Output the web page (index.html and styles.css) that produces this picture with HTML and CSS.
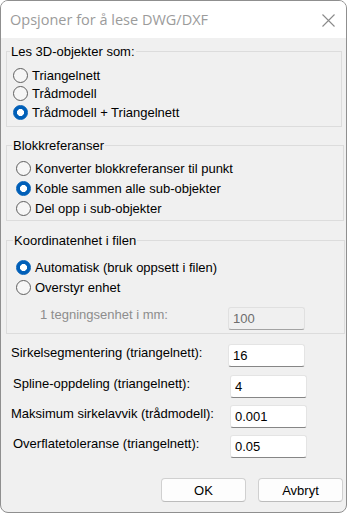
FILE: index.html
```html
<!DOCTYPE html>
<html lang="no">
<head>
  <meta charset="UTF-8">
  <meta name="viewport" content="width=device-width, initial-scale=1.0">
  <title>Opsjoner for å lese DWG/DXF</title>
  <link rel="stylesheet" href="styles.css">
</head>
<body>
  <div class="window">
    <div class="titlebar">
      <span class="title">Opsjoner for å lese DWG/DXF</span>
      <svg class="close" width="13" height="13" viewBox="0 0 13 13">
        <path d="M0.5 0.5 L12.5 12.5 M12.5 0.5 L0.5 12.5" stroke="#8a8a8a" stroke-width="1.1" fill="none"/>
      </svg>
    </div>

    <div class="content">
      <fieldset class="group group-objects">
        <legend>Les 3D-objekter som:</legend>
        <div class="options">
          <label class="option"><input type="radio" name="objects"> Triangelnett</label>
          <label class="option"><input type="radio" name="objects"> Trådmodell</label>
          <label class="option"><input type="radio" name="objects" checked> Trådmodell + Triangelnett</label>
        </div>
      </fieldset>

      <fieldset class="group group-blocks">
        <legend>Blokkreferanser</legend>
        <div class="options">
          <label class="option"><input type="radio" name="blocks"> Konverter blokkreferanser til punkt</label>
          <label class="option"><input type="radio" name="blocks" checked> Koble sammen alle sub-objekter</label>
          <label class="option"><input type="radio" name="blocks"> Del opp i sub-objekter</label>
        </div>
      </fieldset>

      <fieldset class="group group-units">
        <legend>Koordinatenhet i filen</legend>
        <div class="options">
          <label class="option"><input type="radio" name="units" checked> Automatisk (bruk oppsett i filen)</label>
          <label class="option"><input type="radio" name="units"> Overstyr enhet</label>
          <div class="unit-row">
            <label for="unit">1 tegningsenhet i mm:</label>
            <input id="unit" type="text" value="100" disabled>
          </div>
        </div>
      </fieldset>

      <div class="fields">
        <div class="field">
          <label for="segments">Sirkelsegmentering (triangelnett):</label>
          <input id="segments" type="text" value="16">
        </div>
        <div class="field indent">
          <label for="spline">Spline-oppdeling (triangelnett):</label>
          <input id="spline" type="text" value="4">
        </div>
        <div class="field wide">
          <label for="deviation">Maksimum sirkelavvik (trådmodell):</label>
          <input id="deviation" type="text" value="0.001">
        </div>
        <div class="field indent">
          <label for="tolerance">Overflatetoleranse (triangelnett):</label>
          <input id="tolerance" type="text" value="0.05">
        </div>
      </div>

      <div class="buttons">
        <button>OK</button>
        <button>Avbryt</button>
      </div>
    </div>
  </div>
</body>
</html>
```

FILE: styles.css
```css
body {
  margin: 0;
  background-color: #fff;
  font-family: "Liberation Sans", Arial, sans-serif;
  font-size: 13px;
  color: #000;
}

.window {
  width: 347px;
  height: 513px;
  box-sizing: border-box;
  border: 1px solid #8f8f8f;
  border-radius: 8px;
  overflow: hidden;
  background-color: #f0f0f0;
}

.titlebar {
  height: 37px;
  display: flex;
  align-items: center;
  justify-content: space-between;
  padding: 0 11px 0 9px;
  background-color: #fff;
}

.title {
  font-family: "Open Sans", sans-serif;
  font-size: 14.5px;
  color: #9b9b9b;
}

.close {
  margin-top: 1px;
}

.content {
  padding: 0 3px 0 5px;
}

/* Group boxes */
.group {
  margin: 0;
  padding: 0;
  min-width: 0;
  box-sizing: border-box;
  border: 1px solid #dcdcdc;
}

.group legend {
  padding: 0 1px;
  line-height: 15px;
}

.group-objects {
  margin-top: 6px;
  width: 336px;
}

.group-objects legend {
  margin-left: 3px;
}

.group-objects .options {
  padding: 7px 0 4px 6px;
}

.group-objects .option {
  height: 18px;
}

.group-objects .option:last-child {
  height: 20px;
}

.group-blocks {
  margin-top: 11px;
  width: 338px;
}

.group-blocks legend {
  margin-left: 5px;
}

.group-blocks .options {
  padding: 5px 0 2px 9px;
}

.group-units {
  margin-top: 12px;
  width: 339px;
}

.group-units legend {
  margin-left: 6px;
}

.group-units .options {
  padding: 9px 0 3px 9px;
}

.option {
  display: flex;
  align-items: center;
  height: 20px;
}

.option input {
  appearance: none;
  width: 15px;
  height: 15px;
  margin: 0 4px 0 0;
  box-sizing: border-box;
  border: 1px solid #5f5f5f;
  border-radius: 50%;
  background-color: #f6f6f6;
}

.option input:checked {
  border-color: #005fb8;
  background: radial-gradient(circle, #fff 0 3.2px, #005fb8 3.8px);
}

.unit-row {
  display: flex;
  height: 23px;
  margin-top: 10px;
  padding-left: 24px;
}

.unit-row label {
  width: 188px;
  line-height: 16px;
  color: #8d8d8d;
}

/* Text boxes */
input[type="text"] {
  width: 77px;
  height: 23px;
  box-sizing: border-box;
  margin: 0;
  padding: 0 4px;
  border: 1px solid #e4e4e4;
  border-bottom-color: #868686;
  border-radius: 3px;
  background-color: #fff;
  font-family: "Liberation Sans", Arial, sans-serif;
  font-size: 13px;
  color: #000;
}

input[type="text"]:disabled {
  background-color: #f0f0f0;
  border-color: #e0e0e0;
  border-bottom-color: #a3a3a3;
  color: #6d6d6d;
}

.fields {
  margin-top: 10px;
}

.field {
  display: flex;
  height: 30px;
  padding-left: 5px;
}

.field:first-child {
  height: 31px;
}

.field label {
  width: 217px;
  line-height: 18px;
}

.field.indent {
  padding-left: 7px;
}

.field.wide label {
  width: 219px;
}

.buttons {
  display: flex;
  justify-content: flex-end;
  gap: 12px;
  margin-top: 13px;
}

button {
  width: 85px;
  height: 24px;
  padding: 0;
  border: 1px solid #d0d0d0;
  border-bottom-color: #bcbcbc;
  border-radius: 4px;
  background-color: #fdfdfd;
  font-family: "Liberation Sans", Arial, sans-serif;
  font-size: 13px;
  color: #000;
}
```
